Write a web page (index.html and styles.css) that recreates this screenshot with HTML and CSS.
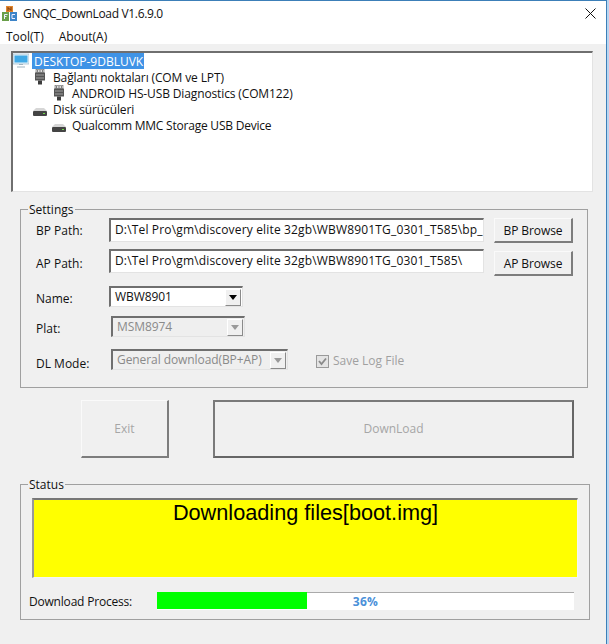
FILE: index.html
```html
<!DOCTYPE html>
<html lang="tr">
<head>
<meta charset="utf-8">
<title>GNQC_DownLoad V1.6.9.0</title>
<link rel="stylesheet" href="styles.css">
</head>
<body>
<div class="window">
  <header class="titlebar">
    <svg class="app-icon" viewBox="0 0 15 15" width="15" height="15"><rect x="4" y="0" width="7" height="6" fill="#e2862e"/><path d="M6 5V1.500l3 3V1" fill="none" stroke="#6b2f08" stroke-width=".9"/><rect x="0" y="6" width="7" height="9" fill="#6a9f4a"/><path d="M2.500 13V8.500h3M2.500 10.500h2" fill="none" stroke="#eef" stroke-width="1"/><rect x="8" y="6" width="7" height="9" fill="#3d84c8"/><path d="M13 8.500h-3v4h3" fill="none" stroke="#eef" stroke-width="1"/></svg>
    <span class="title">GNQC_DownLoad V1.6.9.0</span>
    <svg class="close" viewBox="0 0 11 11" width="11" height="11"><path d="M.5.5l10 10M10.500.5l-10 10" stroke="#111" stroke-width="1" fill="none"/></svg>
  </header>
  <nav class="menubar"><span>Tool(T)</span><span>About(A)</span></nav>
  <main class="client">
    <section class="tree inset">
      <div class="node root">
        <svg class="ic" viewBox="0 0 16 16" width="16" height="16"><rect x="0" y="1" width="16" height="10" fill="#e4f3fb" stroke="#9ab8cc" stroke-width=".7"/><rect x="1.500" y="2.500" width="13" height="7" fill="#3fa9e6"/><path d="M6 11.500h4M4 14h8" stroke="#9fb3bf" fill="none" stroke-width="1.200"/></svg>
        <span class="sel">DESKTOP-9DBLUVK</span>
      </div>
      <div class="node l1"><svg class="ic" viewBox="0 0 16 16" width="16" height="16"><use href="#port"/></svg><span>Bağlantı noktaları (COM ve LPT)</span></div>
      <div class="node l2"><svg class="ic" viewBox="0 0 16 16" width="16" height="16"><use href="#port"/></svg><span>ANDROID HS-USB Diagnostics (COM122)</span></div>
      <div class="node l1"><svg class="ic" viewBox="0 0 16 16" width="16" height="16"><use href="#disk"/></svg><span>Disk sürücüleri</span></div>
      <div class="node l2 tight"><svg class="ic" viewBox="0 0 16 16" width="16" height="16"><use href="#disk"/></svg><span>Qualcomm MMC Storage USB Device</span></div>
    </section>

    <fieldset class="group settings">
      <legend>Settings</legend>
      <div class="row path-row">
        <label>BP Path:</label>
        <div class="edit inset">D:\Tel Pro\gm\discovery elite 32gb\WBW8901TG_0301_T585\bp_</div>
        <button class="btn browse" type="button">BP Browse</button>
      </div>
      <div class="row path-row second">
        <label>AP Path:</label>
        <div class="edit inset">D:\Tel Pro\gm\discovery elite 32gb\WBW8901TG_0301_T585\</div>
        <button class="btn browse" type="button">AP Browse</button>
      </div>
      <div class="row name-row">
        <label>Name:</label>
        <div class="combo inset name"><span>WBW8901</span><i class="drop"></i></div>
      </div>
      <div class="row plat-row">
        <label>Plat:</label>
        <div class="combo inset off plat"><span>MSM8974</span><i class="drop"></i></div>
      </div>
      <div class="row mode-row">
        <label>DL Mode:</label>
        <div class="combo inset off mode"><span>General download(BP+AP)</span><i class="drop"></i></div>
        <div class="check">
          <svg viewBox="0 0 13 13" width="13" height="13"><rect x=".5" y=".5" width="12" height="12" fill="#e4e4e4" stroke="#9a9a9a"/><path d="M3 6l2.500 3L10 3.500" fill="none" stroke="#8a8a8a" stroke-width="1.800"/></svg>
          <span>Save Log File</span>
        </div>
      </div>
    </fieldset>

    <div class="actions">
      <button class="btn big exit" type="button">Exit</button>
      <button class="btn big download" type="button">DownLoad</button>
    </div>

    <fieldset class="group status">
      <legend>Status</legend>
      <div class="banner">Downloading files[boot.img]</div>
      <div class="row progress-row">
        <label>Download Process:</label>
        <div class="progress"><div class="fill" style="width:36%"></div><span>36%</span></div>
      </div>
    </fieldset>
  </main>
</div>
<svg class="defs" width="0" height="0">
  <defs>
    <g id="port"><rect x="4" y="0.500" width="8" height="3" fill="#dcdcdc" stroke="#666" stroke-width=".6"/><path d="M5.500 1v2M8 1v2M10.500 1v2" stroke="#555" stroke-width=".7"/><rect x="3" y="3.500" width="10" height="8" fill="#555"/><rect x="4" y="5.500" width="8" height="1" fill="#a0a0a0"/><rect x="4" y="8.500" width="8" height="1" fill="#a0a0a0"/><rect x="6" y="11.500" width="4" height="4" fill="#3c3c3c"/></g>
    <g id="disk"><path d="M4 7h8l3 3H1z" fill="#d6d6d6"/><rect x="1" y="10" width="14" height="5" rx="1" fill="#444"/><rect x="11" y="12" width="2" height="1" fill="#6fdc4c"/></g>
  </defs>
</svg>
</body>
</html>
```

FILE: styles.css
```css
* { box-sizing: border-box; }
html, body { margin: 0; height: 100%; }
body {
  background: #b9d5f0;
  font-family: "Open Sans", "Noto Sans", "Liberation Sans", sans-serif;
  font-size: 12px;
  line-height: 16px;
  color: #111;
  overflow: hidden;
}
.window {
  width: 607px;
  height: 644px;
  border-top: 1px solid #3c7fb8;
  border-right: 1px solid #3c7fb8;
  background: #f0f0f0;
  display: flex;
  flex-direction: column;
}
.defs { position: absolute; }
.titlebar {
  height: 23px;
  background: #fff;
  display: flex;
  align-items: center;
  padding: 2px 10px 0 2px;
  flex: none;
}
.app-icon { margin-right: 6px; }
.title { flex: 1; letter-spacing: -.33px; }
.menubar {
  height: 20px;
  background: #fff;
  display: flex;
  gap: 15px;
  padding: 5px 0 0 6px;
  align-items: center;
  flex: none;
}
.client { flex: 1; padding: 7px 0 0 11px; }
.inset {
  border-style: solid;
  border-width: 2px 1px 1px 2px;
  border-color: #6f6f6f #e3e3e3 #e3e3e3 #6f6f6f;
  background: #fff;
}
.tree { width: 582px; height: 141px; border-left-width: 2px; }
.node { display: flex; align-items: center; height: 16px; white-space: nowrap; letter-spacing: -.13px; }
.node span { height: 16px; line-height: 18px; }
.node .ic { flex: none; margin-right: 5px; }
.root .ic { margin-right: 3px; }
.root { letter-spacing: 0; }
.l1 { padding-left: 19px; }
.l2 { padding-left: 38px; }
.tight { letter-spacing: -.22px; }
.sel { background: #3f93e6; color: #fff; padding: 0 1px 0 2px; }
.group {
  margin: 0;
  padding: 0;
  border: 1px solid #a0a0a0;
  min-width: 0;
}
.group legend { padding: 2px 1px 0; margin-left: 7px; line-height: 14px; }
.settings { width: 568px; height: 187px; margin: 9px 0 0 9px; }
.row { display: flex; align-items: flex-start; }
.row label { white-space: nowrap; flex: none; }
.path-row { padding-left: 15px; height: 25px; margin-top: 1px; align-items: flex-start; }
.path-row label { width: 73px; padding-top: 5px; }
.second { height: 27px; margin-top: 6px; }
.second label { padding-top: 7px; }
.second .browse { margin-top: 2px; }
.edit {
  width: 375px;
  height: 24px;
  padding: 2px 0 0 4px;
  white-space: nowrap;
  overflow: hidden;
  flex: none;
  letter-spacing: .16px;
}
.btn {
  font: inherit;
  background: #f0f0f0;
  color: #111;
  border-style: solid;
  border-width: 1px 2px 2px 1px;
  border-color: #fafafa #7d7d7d #7d7d7d #fafafa;
  padding: 0;
}
.browse { width: 79px; height: 25px; margin-left: 10px; flex: none; letter-spacing: -.1px; padding-top: 1px; }
.combo {
  height: 21px;
  display: flex;
  align-items: center;
  justify-content: space-between;
  padding-left: 4px;
  flex: none;
  letter-spacing: -.08px;
}
.combo.off { background: #efefef; color: #8a8a8a; }
.drop {
  width: 16px;
  height: 17px;
  background: #f0f0f0;
  border-style: solid;
  border-width: 1px;
  border-color: #fff #8a8a8a #8a8a8a #fff;
  position: relative;
  flex: none;
  margin-right: 1px;
}
.drop::after {
  content: "";
  position: absolute;
  left: 3px;
  top: 5px;
  border: 4px solid transparent;
  border-top: 5px solid #000;
  border-bottom: 0;
}
.off .drop::after { border-top-color: #9a9a9a; }
.name-row, .plat-row, .mode-row { padding-left: 15px; }
.name-row label, .plat-row label { padding-top: 5px; }
.mode-row label { padding-top: 7px; }
.name-row { margin-top: 10px; }
.name-row label { width: 73px; }
.name { width: 134px; }
.plat-row { margin-top: 9px; }
.plat-row label { width: 75px; }
.plat { width: 134px; }
.mode-row { margin-top: 12px; height: 21px; }
.mode-row label { width: 75px; }
.mode { width: 177px; }
.check { display: flex; align-items: center; gap: 4px; margin: 4px 0 0 28px; color: #a0a0a0; }
.actions { display: flex; gap: 44px; margin: 12px 0 0 70px; }
.big { height: 58px; color: #a6a6a6; }
.exit { width: 88px; }
.download { width: 361px; border-width: 2px; border-color: #7a7a7a #666 #666 #7a7a7a; }
.status { width: 570px; height: 144px; margin: 18px 0 0 9px; }
.banner {
  width: 546px;
  height: 80px;
  margin: 6px 0 0 11px;
  background: #ff0;
  color: #000;
  border-style: solid;
  border-width: 2px 1px 1px 2px;
  border-color: #777 #f5f5f5 #f5f5f5 #999;
  font-family: "Liberation Sans", Arial, sans-serif;
  font-size: 21.7px;
  line-height: 26px;
  text-align: center;
}
.progress-row { padding-left: 8px; margin-top: 14px; }
.progress-row label { width: 128px; letter-spacing: -.2px; padding-top: 2px; }
.progress {
  width: 417px;
  height: 18px;
  background: #fff;
  border-top: 1px solid #aaa;
  position: relative;
  flex: none;
  text-align: center;
  font-weight: 700;
  color: #4a90d9;
  line-height: 18px;
  letter-spacing: .3px;
}
.fill { position: absolute; left: 0; top: -1px; bottom: 1px; background: #0f0; }
.progress span { position: relative; }
```
